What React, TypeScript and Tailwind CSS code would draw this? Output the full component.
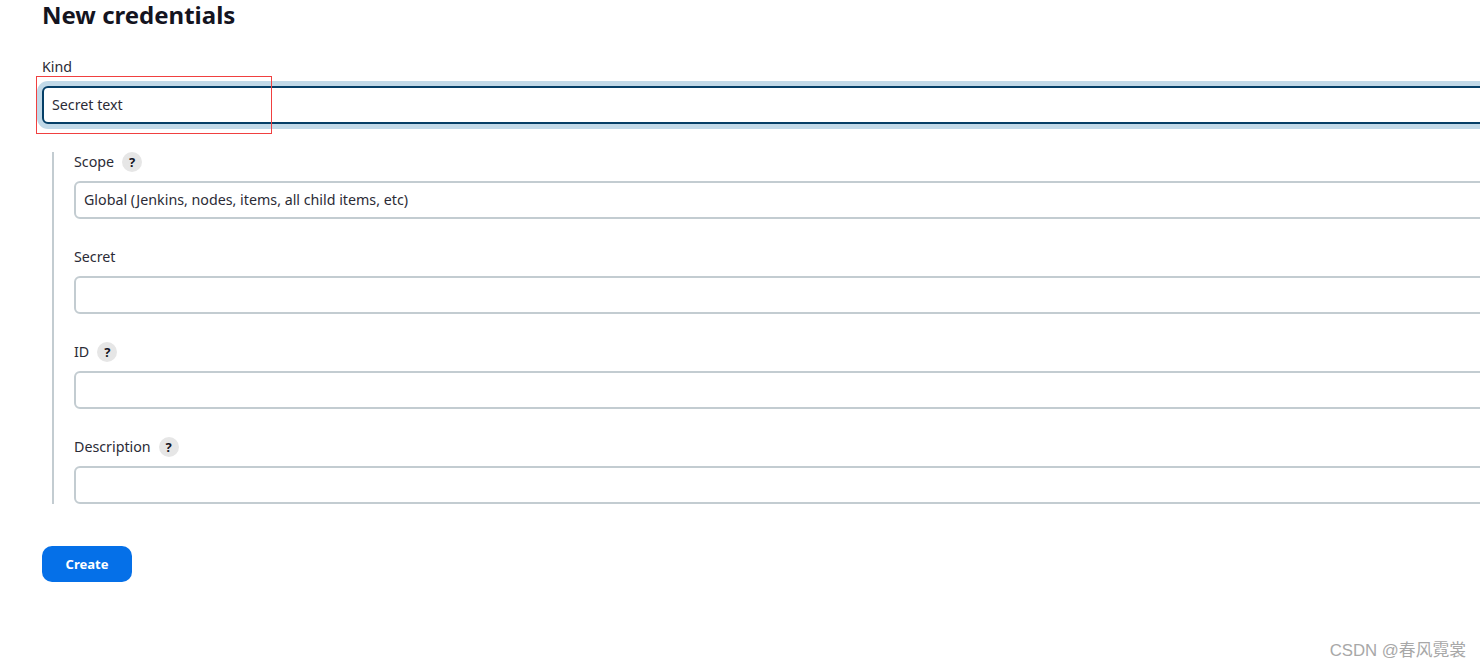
import React from 'react';

const font = { fontFamily: '"Noto Sans", "Noto Sans CJK SC", sans-serif' };

function HelpBadge() {
  return (
    <span className="flex h-5 w-5 items-center justify-center rounded-full bg-[#e6e6e6] text-[13px] font-bold text-[#14141f]">
      ?
    </span>
  );
}

function Field({ label, help, value }: { label: string; help?: boolean; value?: string }) {
  return (
    <div className="flex flex-col">
      <div className="flex h-5 items-center gap-2 text-[14.25px] leading-5 text-[#2b2b36]">
        <span>{label}</span>
        {help && <HelpBadge />}
      </div>
      <div className="mt-[9px] flex h-[38px] w-[1500px] items-center rounded-md border-2 border-[#c3ccd1] bg-white px-2 text-[14.25px] text-[#2b2b36]">
        {value}
      </div>
    </div>
  );
}

export default function App() {
  return (
    <div className="relative h-[669px] w-full overflow-hidden bg-white pl-[42px]" style={font}>
      <h1 className="h-[30px] text-2xl font-bold leading-[30px] text-[#14141f]">New credentials</h1>

      <div className="mt-[27px] h-5 text-[14.25px] leading-5 text-[#2b2b36]">Kind</div>
      <div className="mt-[9px] flex h-[38px] w-[1500px] items-center rounded-md border-2 border-[#053f67] bg-white px-2 text-[14.25px] text-[#2b2b36] shadow-[0_0_0_5px_#c1d9e8]">
        Secret text
      </div>

      <div className="ml-[10px] mt-[28px] flex w-[1500px] flex-col gap-[28px] border-l-2 border-[#c3ccd1] pl-[20px]">
        <Field label="Scope" help value="Global (Jenkins, nodes, items, all child items, etc)" />
        <Field label="Secret" />
        <Field label="ID" help />
        <Field label="Description" help />
      </div>

      <button className="mt-[42px] h-9 w-[90px] rounded-[10px] bg-[#0570e8] pt-px text-[13px] font-bold text-white">
        Create
      </button>

      {/* annotation box */}
      <div className="absolute left-[36px] top-[76px] h-[58px] w-[236px] border border-[#f04040]" />

      {/* watermark */}
      <div className="absolute right-[14px] top-[640px] text-[16.8px] leading-[22px] text-[#a8a8a8]" style={{ fontFamily: '"Liberation Sans", "Noto Sans CJK SC", sans-serif' }}>
        CSDN @春风霓裳
      </div>
    </div>
  );
}
